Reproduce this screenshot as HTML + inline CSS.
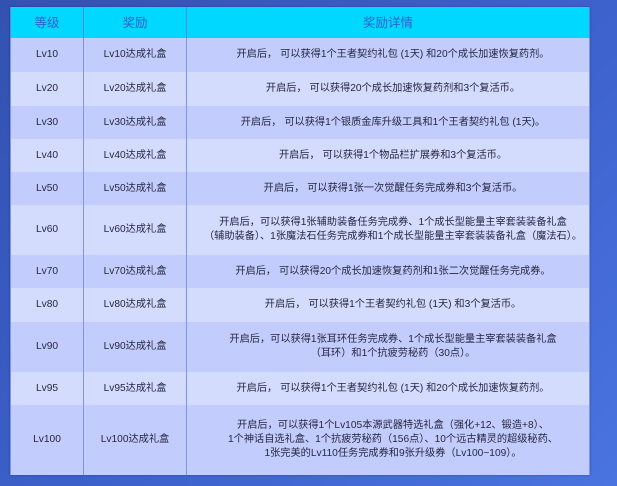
<!DOCTYPE html>
<html><head><meta charset="utf-8"><style>
html,body{margin:0;padding:0;width:617px;height:486px;overflow:hidden;background:linear-gradient(135deg,#3352b0,#3e63cf 60%,#4a74e0);}
table{position:absolute;left:10px;top:7px;width:580px;border-collapse:collapse;font-family:"Liberation Sans","Noto Sans CJK SC",sans-serif;font-size:10.2px;color:#262640;box-shadow:0 0 2px rgba(0,0,0,.3)}
td,th{text-align:center;padding:0 4px;line-height:14px;border-left:1px solid #7f96e8;border-right:1px solid #7f96e8}
td:nth-child(3){padding-left:10px;padding-right:0}
th{background:#00d8ff;color:#2f5fd0;font-weight:normal;font-size:12.5px;height:31px;border-color:#5a88e0}
tr:nth-child(odd) td{background:#d4dcfe}
tr:nth-child(even) td{background:#c3cdfd}
</style></head><body>
<table>
<tr><th style="width:64px">等级</th><th style="width:94px">奖励</th><th>奖励详情</th></tr>
<tr style="height:34px"><td>Lv10</td><td>Lv10达成礼盒</td><td>开启后， 可以获得1个王者契约礼包 (1天) 和20个成长加速恢复药剂。</td></tr>
<tr style="height:34px"><td>Lv20</td><td>Lv20达成礼盒</td><td>开启后， 可以获得20个成长加速恢复药剂和3个复活币。</td></tr>
<tr style="height:33px"><td>Lv30</td><td>Lv30达成礼盒</td><td>开启后， 可以获得1个银质金库升级工具和1个王者契约礼包 (1天)。</td></tr>
<tr style="height:33px"><td>Lv40</td><td>Lv40达成礼盒</td><td>开启后， 可以获得1个物品栏扩展券和3个复活币。</td></tr>
<tr style="height:33px"><td>Lv50</td><td>Lv50达成礼盒</td><td>开启后， 可以获得1张一次觉醒任务完成券和3个复活币。</td></tr>
<tr style="height:50px"><td>Lv60</td><td>Lv60达成礼盒</td><td>开启后，可以获得1张辅助装备任务完成券、1个成长型能量主宰套装装备礼盒<br>（辅助装备）、1张魔法石任务完成券和1个成长型能量主宰套装装备礼盒（魔法石）。</td></tr>
<tr style="height:33px"><td>Lv70</td><td>Lv70达成礼盒</td><td>开启后， 可以获得20个成长加速恢复药剂和1张二次觉醒任务完成券。</td></tr>
<tr style="height:34px"><td>Lv80</td><td>Lv80达成礼盒</td><td>开启后， 可以获得1个王者契约礼包 (1天) 和3个复活币。</td></tr>
<tr style="height:50px"><td>Lv90</td><td>Lv90达成礼盒</td><td>开启后，可以获得1张耳环任务完成券、1个成长型能量主宰套装装备礼盒<br>（耳环）和1个抗疲劳秘药（30点）。</td></tr>
<tr style="height:33px"><td>Lv95</td><td>Lv95达成礼盒</td><td>开启后， 可以获得1个王者契约礼包 (1天) 和20个成长加速恢复药剂。</td></tr>
<tr style="height:70px"><td>Lv100</td><td>Lv100达成礼盒</td><td>开启后，可以获得1个Lv105本源武器特选礼盒（强化+12、锻造+8）、<br>1个神话自选礼盒、1个抗疲劳秘药（156点）、10个远古精灵的超级秘药、<br>1张完美的Lv110任务完成券和9张升级券（Lv100~109）。</td></tr>
</table>
</body></html>
